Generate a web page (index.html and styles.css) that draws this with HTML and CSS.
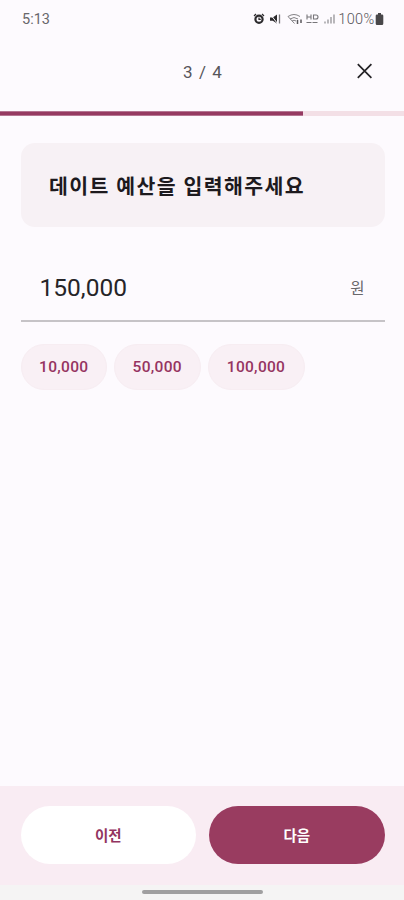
FILE: index.html
```
<!DOCTYPE html>
<html lang="ko">
<head>
<meta charset="utf-8">
<meta name="viewport" content="width=device-width, initial-scale=1">
<title>데이트 예산</title>
<link rel="stylesheet" href="styles.css">
</head>
<body>
<div class="screen">
  <div class="status">
    <span class="clock">5:13</span>
    <div class="status-icons">
      <svg class="indicators" width="84" height="16" viewBox="0 0 84 16" aria-hidden="true">
        <g fill="none" stroke="#2c2a2d" stroke-width="1.2">
          <path d="M1 5l2-2M11 5L9 3"/>
          <circle cx="6" cy="8.2" r="3.6" stroke-width="2.2"/>
          <path d="M6 6.4v2h1.8"/>
        </g>
        <g fill="#2c2a2d">
          <path d="M17 6.4h2.800L24 3.600v9l-4.200-2.800H17z"/>
        </g>
        <path d="M17.500 3.500l7 9" stroke="#fdfafe" stroke-width="1"/>
        <path d="M26.500 3.500v9" stroke="#777579" stroke-width="1.300"/>
        <g fill="none" stroke="#858387" stroke-width="1">
          <path d="M35 5.500q6-4 12 0M37 8q4-3 8 0M39 10q2-1.600 4 0"/>
          <path d="M35 5.500l6.500 7"/>
        </g>
        <path d="M44.500 9v4M48 8.500v3.500" stroke="#59575b" stroke-width="1.500"/>
        <g fill="none" stroke="#777579" stroke-width="1.100">
          <path d="M54 3.500v5M58 3.500v5M54 6h4M60.500 4h2.500q2 0 2 2t-2 2h-2.500z"/>
          <path d="M53.500 11.500h12" stroke-dasharray="5 1"/>
        </g>
        <path d="M72 12.500v-2M75 12.500V8.500M78 12.500V6M81 12.500V3.500" stroke="#8c8a8e" stroke-width="1.200"/>
      </svg>
      <span class="percent">100%</span>
      <svg class="battery" width="9" height="14" viewBox="0 0 9 14" aria-hidden="true"><path d="M3 1h3v1.500h1q1.300 0 1.300 1.300v7.700Q8.300 13 7 13H2Q.7 13 .7 11.500V3.800Q.7 2.500 2 2.500h1z" fill="#49474a"/></svg>
    </div>
  </div>
  <header class="header">
    <span class="step">3 / 4</span>
    <button class="close" aria-label="닫기">
      <svg width="16" height="16" viewBox="0 0 16 16"><path d="M.8 1.200l13.600 13.600M14.400 1.200L.8 14.800" stroke="#242226" stroke-width="1.700" fill="none"/></svg>
    </button>
  </header>
  <div class="progress"><div class="progress-fill"></div></div>
  <main class="content">
    <h1 class="question">데이트 예산을 입력해주세요</h1>
    <div class="field"><span class="amount">150,000</span><span class="unit">원</span></div>
    <div class="chips">
      <button class="chip">10,000</button>
      <button class="chip">50,000</button>
      <button class="chip chip-wide">100,000</button>
    </div>
  </main>
  <footer class="actions">
    <button class="action">이전</button>
    <button class="action action-primary">다음</button>
  </footer>
  <div class="navbar"><div class="handle"></div></div>
</div>
</body>
</html>
```
FILE: styles.css
```
* { box-sizing: border-box; }
body {
  margin: 0;
  background: #fdfafe;
  font-family: Roboto, "Noto Sans CJK KR", sans-serif;
}
button { border: 0; padding: 0; margin: 0; font: inherit; }
.screen { height: 900px; display: flex; flex-direction: column; overflow: hidden; }
.status {
  height: 38px;
  padding: 0 20.500px 0 22px;
  display: flex;
  justify-content: space-between;
  align-items: center;
  color: #69676b;
}
.clock { font-size: 14.5px; }
.status-icons { display: flex; align-items: center; }
.percent { font-size: 14.5px; font-weight: 300; letter-spacing: 0.35px; margin-left: 1px; color: #57555a; }
.indicators { margin-right: 0.500px; }
.header {
  height: 73px;
  padding: 0 31px;
  display: grid;
  grid-template-columns: 16px 1fr 16px;
  align-items: center;
  padding-bottom: 7px;
}
.step {
  grid-column: 2;
  text-align: center;
  font-size: 17px;
  letter-spacing: 1.1px;
  padding-left: 2px;
  color: #57555a;
  padding-top: 1px;
}
.close { width: 16px; height: 16px; background: none; }
.close svg { display: block; }
.progress { height: 5px; background: #f3dfe6; }
.progress-fill { width: 75.1%; height: 5px; background: #963a62; border: solid #b57592; border-width: 1px 0; }
.content { flex: 1; padding: 27px 19.500px 0 20.500px; }
.question {
  margin: 0;
  height: 84px;
  padding: 0 28px 0 28.500px;
  border-radius: 14px;
  background: #f7f1f5;
  display: flex;
  align-items: center;
  font-size: 20.500px;
  font-weight: 700;
  letter-spacing: 1.400px;
  color: #1d1a1e;
}
.field {
  height: 95px;
  padding: 27px 19px 0;
  border-bottom: 2px solid #c6c3c7;
  display: flex;
  justify-content: space-between;
  align-items: center;
  color: #262428;
}
.amount { font-size: 24.500px; padding-top: 1px; }
.unit { font-size: 15.500px; color: #69676b; padding: 0 1px 1px 0; }
.chips { display: flex; gap: 7px; margin-top: 22px; }
.chip {
  width: 86.500px;
  height: 46px;
  border-radius: 23px;
  background: #f9f0f5;
  border: 1px solid #f7edf2;
  color: #963461;
  font-size: 15.500px;
  font-weight: 500;
  letter-spacing: 0.3px;
}
.chip-wide { width: 97px; }
.actions {
  height: 99px;
  padding: 20px 19.500px 0 20.500px;
  background: #f9ecf3;
  display: flex;
  gap: 13px;
}
.action {
  flex: 1;
  height: 57.500px;
  border-radius: 29px;
  background: #fff;
  color: #923460;
  font-size: 14.500px;
  font-weight: 700;
}
.action-primary { background: #993c60; color: #fff; }
.navbar { height: 15px; background: #f5f4f4; display: flex; justify-content: center; padding-top: 5px; }
.handle { width: 121px; height: 4px; border-radius: 2px; background: #a09fa0; }
```
